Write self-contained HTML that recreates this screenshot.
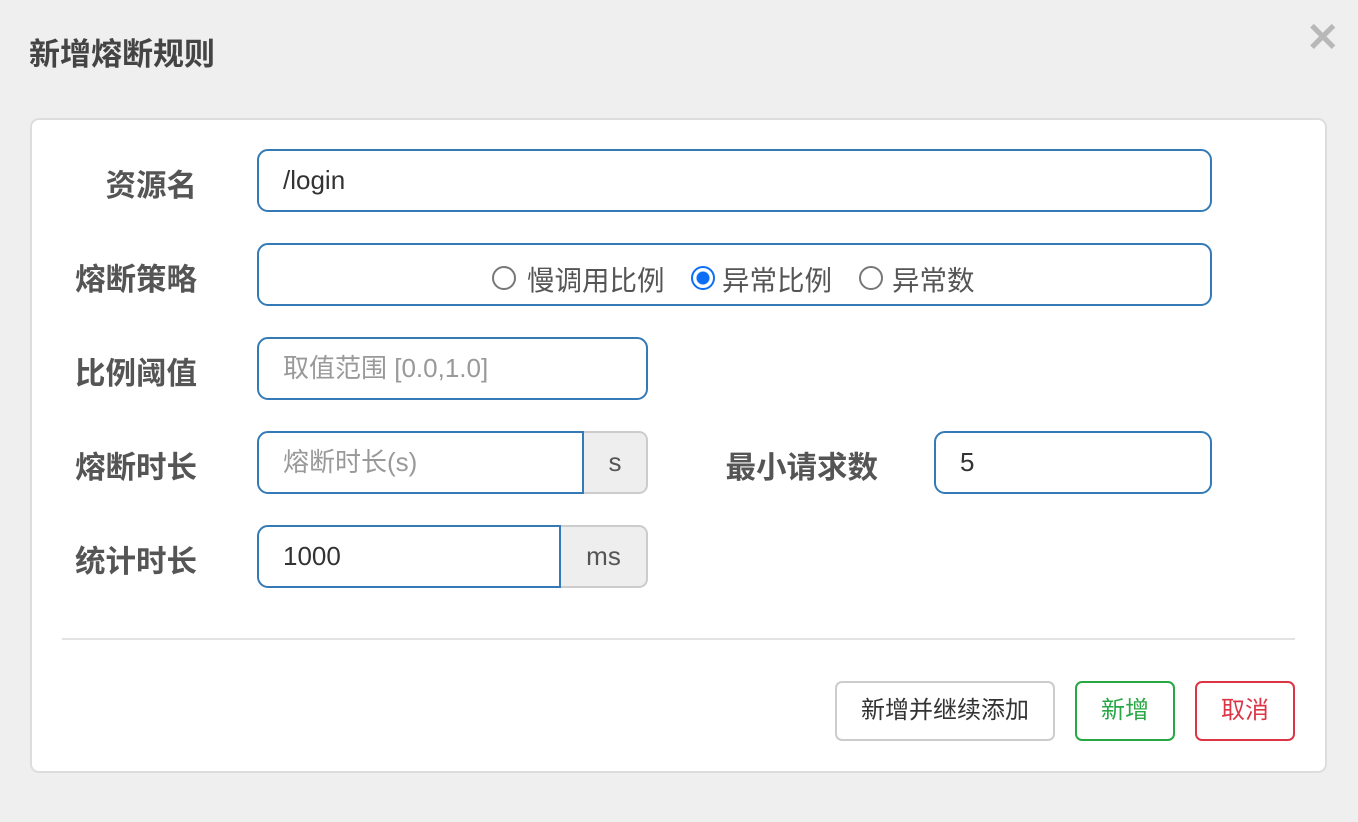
<!DOCTYPE html>
<html><head><meta charset="utf-8"><style>
*{box-sizing:border-box;margin:0;padding:0}
body{width:1358px;height:822px;background:#efefef;font-family:"Liberation Sans","Noto Sans CJK SC",sans-serif;position:relative;overflow:hidden;color:#555}
.a{position:absolute}
.title{left:29px;top:37px;font-size:31px;font-weight:bold;color:#444;line-height:36px}
.close{left:1306px;top:18px;font-size:40px;color:#b8b8b8;font-weight:bold;line-height:40px}
.panel{left:30px;top:118px;width:1297px;height:655px;background:#fff;border:2px solid #ddd;border-radius:9px}
.lbl{font-size:30.5px;font-weight:bold;color:#555;line-height:62px;text-align:right;width:197px;left:0;white-space:nowrap}
.inp{border:2px solid #337ab7;border-radius:11px;height:63px;font-size:26px;line-height:59px;padding-left:24px;color:#333;background:#fff}
.ph{color:#999}
.add{border:2px solid #ccc;border-left:none;background:#eee;border-radius:0 9px 9px 0;height:63px;font-size:26px;line-height:59px;text-align:center;color:#555}
.rad{width:24px;height:24px;border:2px solid #777;border-radius:50%}
.rt{font-size:27.5px;line-height:30px;color:#555}
.btn{top:681px;height:60px;border:2px solid;border-radius:7px;font-size:24px;line-height:56px;text-align:center;background:#fff}
</style></head><body>
<div class="a title">新增熔断规则</div>
<div class="a close">✕</div>
<div class="a panel"></div>
<div class="a lbl" style="top:155px">资源名</div>
<div class="a inp" style="left:257px;top:149px;width:955px">/login</div>
<div class="a lbl" style="top:249px">熔断策略</div>
<div class="a inp" style="left:257px;top:243px;width:955px"></div>
<div class="a rad" style="left:492px;top:266px"></div>
<div class="a rt" style="left:527px;top:266px">慢调用比例</div>
<div class="a rad" style="left:691px;top:266px;border-color:#0b6ef5;background:radial-gradient(circle,#0b6ef5 0 6px,#fff 7px)"></div>
<div class="a rt" style="left:722px;top:266px">异常比例</div>
<div class="a rad" style="left:859px;top:266px"></div>
<div class="a rt" style="left:892px;top:266px">异常数</div>
<div class="a lbl" style="top:343px">比例阈值</div>
<div class="a inp ph" style="left:257px;top:337px;width:391px">取值范围 [0.0,1.0]</div>
<div class="a lbl" style="top:437px">熔断时长</div>
<div class="a inp ph" style="left:257px;top:431px;width:327px;border-radius:11px 0 0 11px">熔断时长(s)</div>
<div class="a add" style="left:584px;top:431px;width:64px">s</div>
<div class="a lbl" style="top:437px;left:680px;width:198px">最小请求数</div>
<div class="a inp" style="left:934px;top:431px;width:278px">5</div>
<div class="a lbl" style="top:531px">统计时长</div>
<div class="a inp" style="left:257px;top:525px;width:304px;border-radius:11px 0 0 11px">1000</div>
<div class="a add" style="left:561px;top:525px;width:87px">ms</div>
<div class="a" style="left:62px;top:638px;width:1233px;height:2px;background:#e3e3e3"></div>
<div class="a btn" style="left:835px;width:220px;border-color:#ccc;color:#333">新增并继续添加</div>
<div class="a btn" style="left:1075px;width:100px;border-color:#28a745;color:#28a745">新增</div>
<div class="a btn" style="left:1195px;width:100px;border-color:#dc3545;color:#dc3545">取消</div>
</body></html>
